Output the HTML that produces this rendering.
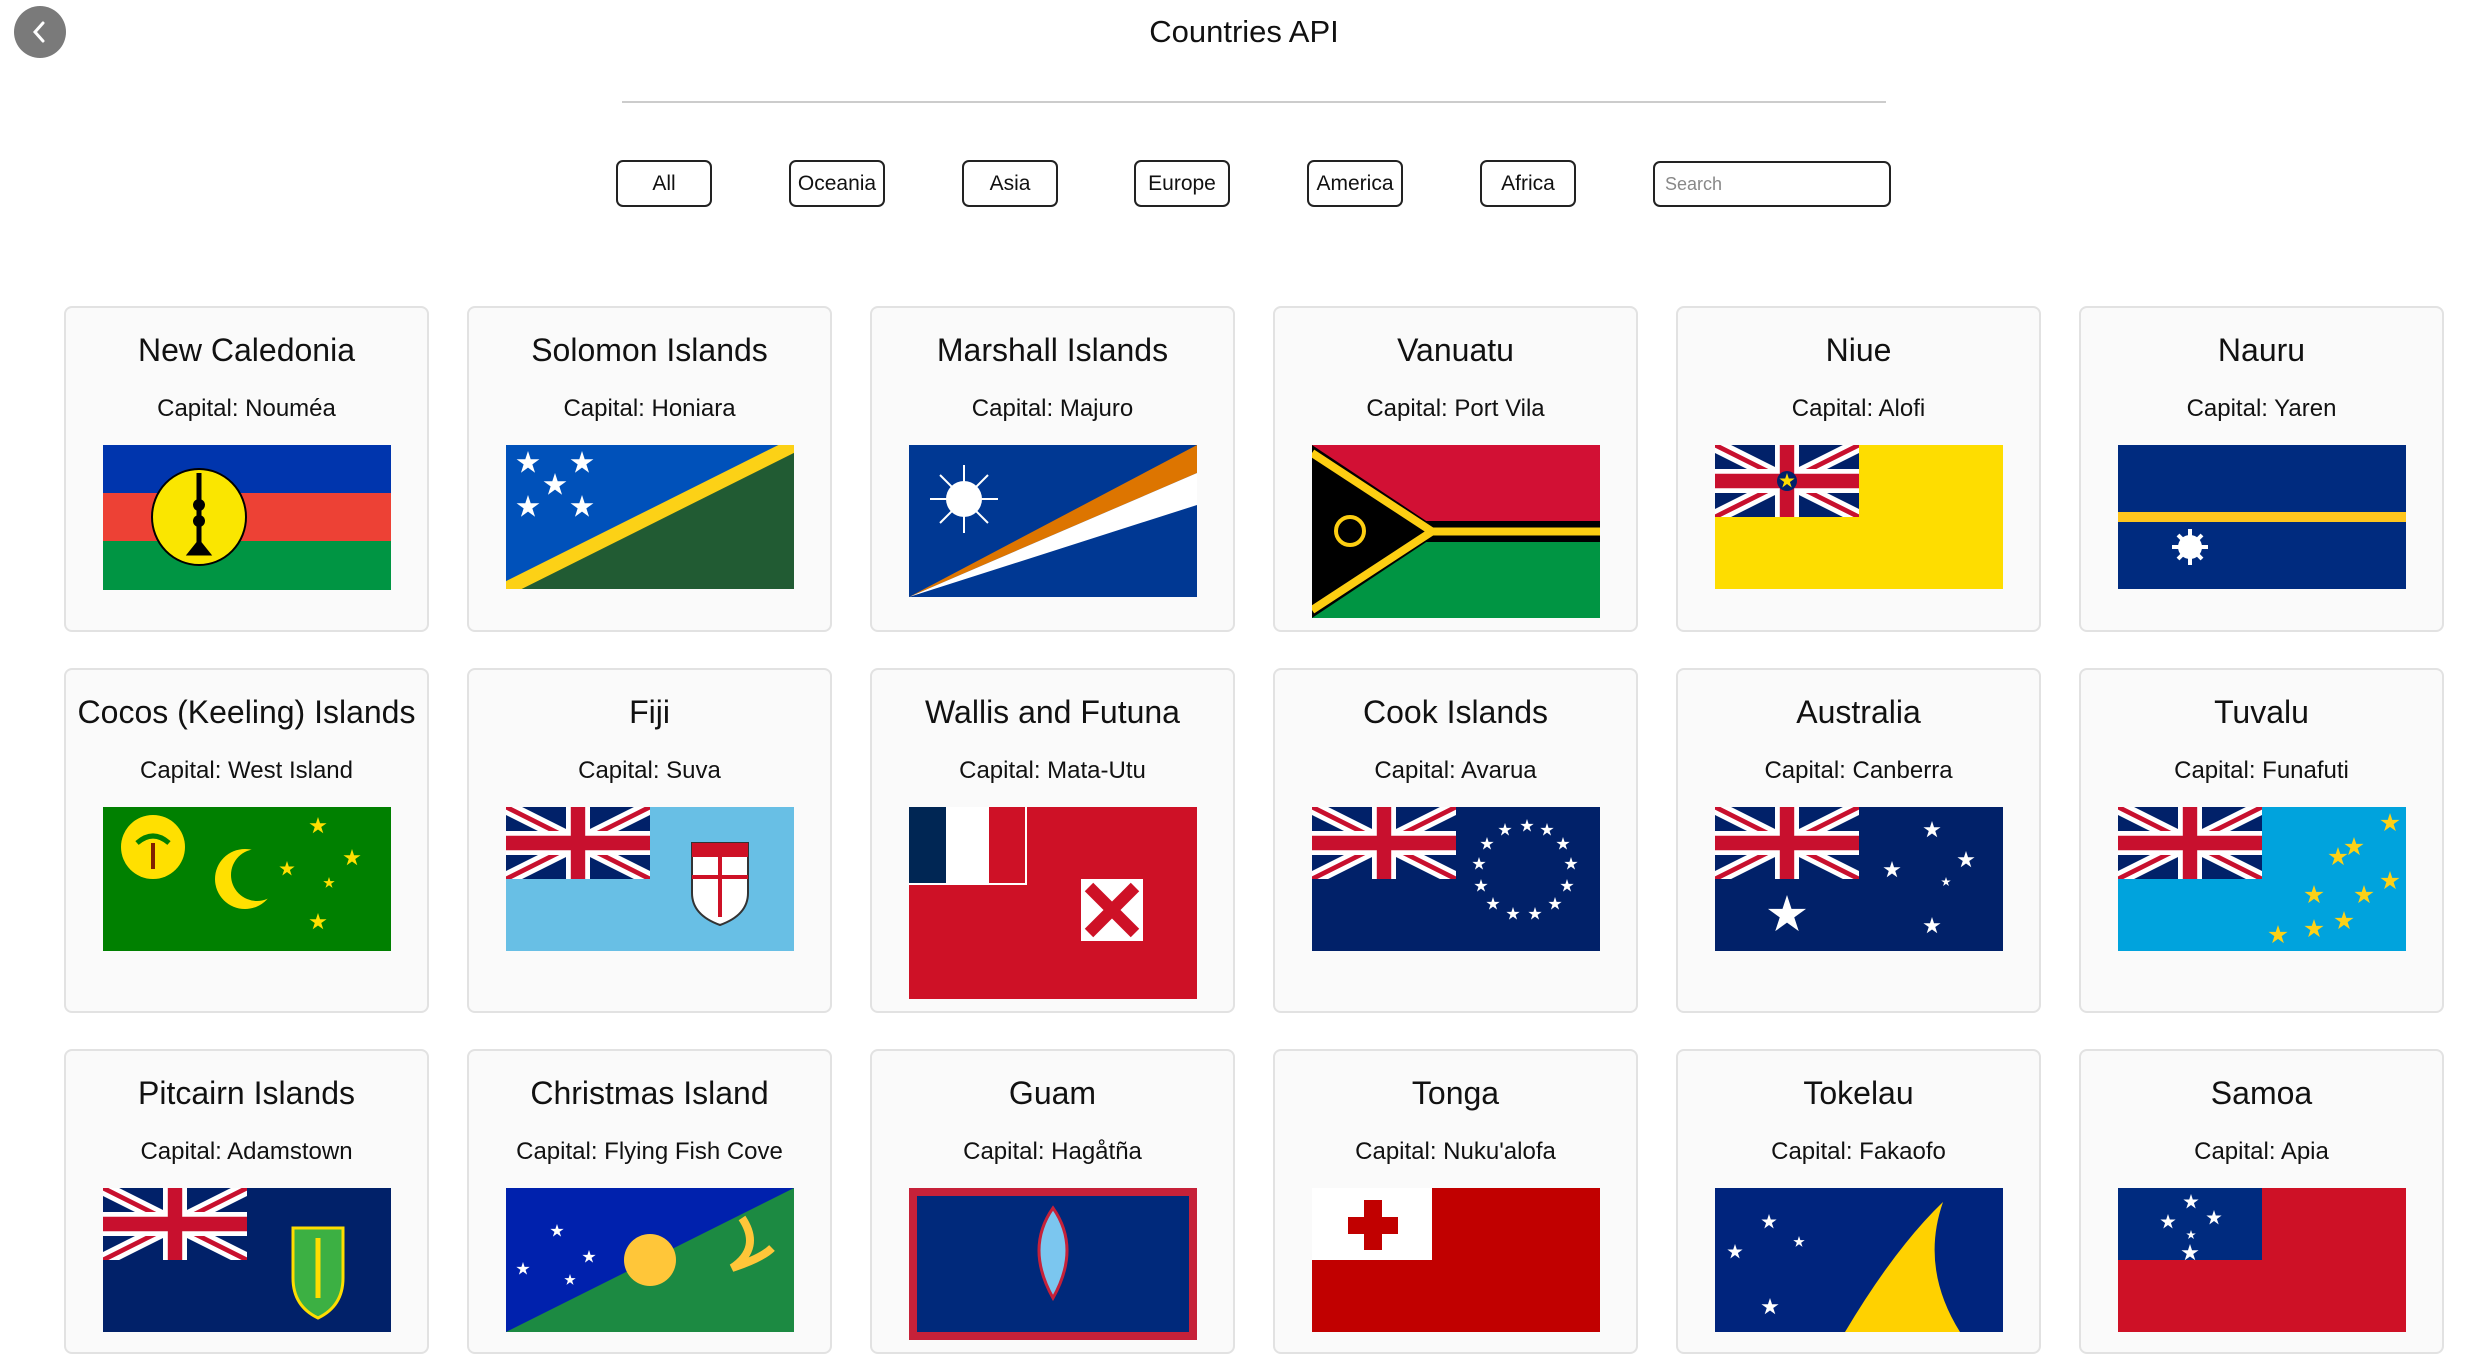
<!DOCTYPE html>
<html><head><meta charset="utf-8">
<style>
*{box-sizing:border-box;margin:0;padding:0}
body{width:2488px;height:1292px;overflow:hidden;background:#fff;font-family:"Liberation Sans",sans-serif;color:#111;position:relative}
.back{position:absolute;left:14px;top:6px;width:52px;height:52px;border-radius:50%;background:#7a7a7a}
h1{position:absolute;left:0;width:2488px;top:14px;text-align:center;font-size:31px;font-weight:normal}
.line{position:absolute;left:622px;top:101px;width:1264px;height:2px;background:#ccc}
.btn{position:absolute;top:160px;width:96px;height:47px;border:2px solid #222;border-radius:7px;font-size:21px;text-align:center;line-height:43px}
.search{position:absolute;top:161px;left:1653px;width:238px;height:46px;border:2px solid #222;border-radius:7px;font-size:18px;color:#888;padding-left:10px;line-height:42px}
.grid{position:absolute;left:64px;top:306px;display:grid;grid-template-columns:repeat(6,365px);column-gap:38px;row-gap:36px}
.card{background:#fafafa;border:2px solid #e2e2e2;border-radius:8px;text-align:center;padding-bottom:12px}
.card h2{font-size:32px;font-weight:normal;margin-top:22px;height:40px;line-height:40px;white-space:nowrap}
.card p{font-size:24px;margin-top:24px;height:30px;line-height:30px}
.card svg{display:block;margin:21px auto 0;width:288px}
</style></head><body>
<svg width="0" height="0" style="position:absolute">
<defs>
<symbol id="uj" viewBox="0 0 60 30"><rect width="60" height="30" fill="#012169"/><path d="M0,0L60,30M60,0L0,30" stroke="#fff" stroke-width="6"/><path d="M0,0L60,30M60,0L0,30" stroke="#C8102E" stroke-width="2"/><path d="M30,0v30M0,15h60" stroke="#fff" stroke-width="10"/><path d="M30,0v30M0,15h60" stroke="#C8102E" stroke-width="6"/></symbol>
<symbol id="st" viewBox="-1 -1 2 2"><polygon points="0,-1 0.225,-0.309 0.951,-0.309 0.363,0.118 0.588,0.809 0,0.382 -0.588,0.809 -0.363,0.118 -0.951,-0.309 -0.225,-0.309"/></symbol>
</defs></svg>
<div class="back"><svg width="52" height="52" viewBox="0 0 52 52"><path d="M29,17 L21,26 L29,35" stroke="#fff" stroke-width="3" fill="none" stroke-linecap="round"/></svg></div>
<h1>Countries API</h1>
<div class="line"></div>
<div class="btn" style="left:616px">All</div>
<div class="btn" style="left:789px">Oceania</div>
<div class="btn" style="left:962px">Asia</div>
<div class="btn" style="left:1134px">Europe</div>
<div class="btn" style="left:1307px">America</div>
<div class="btn" style="left:1480px">Africa</div>
<div class="search">Search</div>

<div class="grid">
<div class="card"><h2>New Caledonia</h2><p>Capital: Nouméa</p>
<svg viewBox="0 0 288 145" height="145"><rect width="288" height="49" fill="#0035ad"/><rect y="48" width="288" height="49" fill="#ed4135"/><rect y="96" width="288" height="49" fill="#009543"/><ellipse cx="96" cy="72" rx="47" ry="48" fill="#fae600" stroke="#000" stroke-width="2"/><path d="M96,28v76M88,108h16l-8,-10z" stroke="#000" stroke-width="5"/><circle cx="96" cy="60" r="6"/><circle cx="96" cy="76" r="6"/></svg></div>

<div class="card"><h2>Solomon Islands</h2><p>Capital: Honiara</p>
<svg viewBox="0 0 288 144" height="144"><rect width="288" height="144" fill="#215b33"/><polygon points="0,0 288,0 0,144" fill="#0051ba"/><path d="M0,144L288,0" stroke="#fcd116" stroke-width="14"/><g fill="#fff"><use href="#st" x="10" y="6" width="24" height="24"/><use href="#st" x="64" y="6" width="24" height="24"/><use href="#st" x="37" y="28" width="24" height="24"/><use href="#st" x="10" y="50" width="24" height="24"/><use href="#st" x="64" y="50" width="24" height="24"/></g></svg></div>

<div class="card"><h2>Marshall Islands</h2><p>Capital: Majuro</p>
<svg viewBox="0 0 288 152" height="152"><rect width="288" height="152" fill="#003893"/><polygon points="0,152 288,0 288,28" fill="#dd7500"/><polygon points="0,152 288,28 288,60" fill="#fff"/><circle cx="55" cy="54" r="18" fill="#fff"/><path d="M55,20v68M21,54h68M31,30l48,48M79,30l-48,48" stroke="#fff" stroke-width="2"/></svg></div>

<div class="card"><h2>Vanuatu</h2><p>Capital: Port Vila</p>
<svg viewBox="0 0 288 173" height="173"><rect width="288" height="87" fill="#d21034"/><rect y="86" width="288" height="87" fill="#009543"/><rect y="76" width="288" height="21" fill="#000"/><path d="M0,0L130,86.5L0,173" fill="#000"/><path d="M0,8L120,86.5L0,165M120,86.5H288" stroke="#fdce12" stroke-width="8" fill="none"/><path d="M0,14L108,86.5L0,159z" fill="#000"/><circle cx="38" cy="86" r="14" stroke="#fdce12" stroke-width="4" fill="none"/></svg></div>

<div class="card"><h2>Niue</h2><p>Capital: Alofi</p>
<svg viewBox="0 0 288 144" height="144"><rect width="288" height="144" fill="#fedd00"/><use href="#uj" width="144" height="72"/><circle cx="72" cy="36" r="10" fill="#012169"/><use href="#st" x="64" y="28" width="16" height="16" fill="#fedd00"/></svg></div>

<div class="card"><h2>Nauru</h2><p>Capital: Yaren</p>
<svg viewBox="0 0 288 144" height="144"><rect width="288" height="144" fill="#002b7f"/><rect y="67" width="288" height="10" fill="#ffc61e"/><circle cx="72" cy="102" r="12" fill="#fff"/><path d="M72,84v36M54,102h36M60,90l24,24M84,90l-24,24" stroke="#fff" stroke-width="4"/></svg></div>

<div class="card"><h2>Cocos (Keeling) Islands</h2><p>Capital: West Island</p>
<svg viewBox="0 0 288 144" height="144"><rect width="288" height="144" fill="#008000"/><circle cx="50" cy="40" r="32" fill="#ffe000"/><path d="M50,62V36" stroke="#802000" stroke-width="4"/><path d="M34,36q16,-14 32,0" stroke="#008000" stroke-width="5" fill="none"/><circle cx="142" cy="72" r="30" fill="#ffe000"/><circle cx="154" cy="68" r="26" fill="#008000"/><g fill="#ffe000"><use href="#st" x="176" y="54" width="16" height="16"/><use href="#st" x="206" y="10" width="18" height="18"/><use href="#st" x="240" y="42" width="18" height="18"/><use href="#st" x="220" y="70" width="12" height="12"/><use href="#st" x="206" y="106" width="18" height="18"/></g></svg></div>

<div class="card"><h2>Fiji</h2><p>Capital: Suva</p>
<svg viewBox="0 0 288 144" height="144"><rect width="288" height="144" fill="#68bfe5"/><use href="#uj" width="144" height="72"/><path d="M186,36h56v50q0,22 -28,32q-28,-10 -28,-32z" fill="#fff" stroke="#333" stroke-width="2"/><rect x="186" y="36" width="56" height="14" fill="#ce1126"/><path d="M214,50v60M186,70h56" stroke="#ce1126" stroke-width="4"/></svg></div>

<div class="card"><h2>Wallis and Futuna</h2><p>Capital: Mata-Utu</p>
<svg viewBox="0 0 288 192" height="192"><rect width="288" height="192" fill="#ce1126"/><rect width="118" height="78" fill="#fff"/><rect x="0" width="37" height="76" fill="#002654"/><rect x="80" width="36" height="76" fill="#ce1126"/><rect x="172" y="72" width="62" height="62" fill="#fff"/><path d="M180,80l46,46M226,80l-46,46" stroke="#ce1126" stroke-width="12"/></svg></div>

<div class="card"><h2>Cook Islands</h2><p>Capital: Avarua</p>
<svg viewBox="0 0 288 144" height="144"><rect width="288" height="144" fill="#012169"/><use href="#uj" width="144" height="72"/><g fill="#fff"><use href="#st" x="208" y="12" width="14" height="14"/><use href="#st" x="228" y="16" width="14" height="14"/><use href="#st" x="244" y="30" width="14" height="14"/><use href="#st" x="252" y="50" width="14" height="14"/><use href="#st" x="248" y="72" width="14" height="14"/><use href="#st" x="236" y="90" width="14" height="14"/><use href="#st" x="216" y="100" width="14" height="14"/><use href="#st" x="194" y="100" width="14" height="14"/><use href="#st" x="174" y="90" width="14" height="14"/><use href="#st" x="162" y="72" width="14" height="14"/><use href="#st" x="160" y="50" width="14" height="14"/><use href="#st" x="168" y="30" width="14" height="14"/><use href="#st" x="186" y="16" width="14" height="14"/></g></svg></div>

<div class="card"><h2>Australia</h2><p>Capital: Canberra</p>
<svg viewBox="0 0 288 144" height="144"><rect width="288" height="144" fill="#012169"/><use href="#uj" width="144" height="72"/><g fill="#fff"><use href="#st" x="52" y="88" width="40" height="40"/><use href="#st" x="208" y="110" width="18" height="18"/><use href="#st" x="168" y="54" width="18" height="18"/><use href="#st" x="208" y="14" width="18" height="18"/><use href="#st" x="242" y="44" width="18" height="18"/><use href="#st" x="226" y="70" width="10" height="10"/></g></svg></div>

<div class="card"><h2>Tuvalu</h2><p>Capital: Funafuti</p>
<svg viewBox="0 0 288 144" height="144"><rect width="288" height="144" fill="#00a3dd"/><use href="#uj" width="144" height="72"/><g fill="#fcd116"><use href="#st" x="262" y="6" width="20" height="20"/><use href="#st" x="226" y="30" width="20" height="20"/><use href="#st" x="210" y="40" width="20" height="20"/><use href="#st" x="262" y="64" width="20" height="20"/><use href="#st" x="236" y="78" width="20" height="20"/><use href="#st" x="186" y="78" width="20" height="20"/><use href="#st" x="216" y="104" width="20" height="20"/><use href="#st" x="186" y="112" width="20" height="20"/><use href="#st" x="150" y="118" width="20" height="20"/></g></svg></div>

<div class="card"><h2>Pitcairn Islands</h2><p>Capital: Adamstown</p>
<svg viewBox="0 0 288 144" height="144"><rect width="288" height="144" fill="#012169"/><use href="#uj" width="144" height="72"/><path d="M190,40h50v50q0,28 -25,40q-25,-12 -25,-40z" fill="#3cb043" stroke="#fedd00" stroke-width="3"/><path d="M215,50v60" stroke="#fedd00" stroke-width="5"/></svg></div>

<div class="card"><h2>Christmas Island</h2><p>Capital: Flying Fish Cove</p>
<svg viewBox="0 0 288 144" height="144"><rect width="288" height="144" fill="#1c8a42"/><polygon points="0,0 288,0 0,144" fill="#0021ad"/><circle cx="144" cy="72" r="26" fill="#ffc639"/><path d="M236,30q20,30 -10,50q30,-10 40,-20" stroke="#ffc639" stroke-width="8" fill="none"/><g fill="#fff"><use href="#st" x="44" y="36" width="14" height="14"/><use href="#st" x="76" y="62" width="14" height="14"/><use href="#st" x="10" y="74" width="14" height="14"/><use href="#st" x="58" y="86" width="12" height="12"/></g></svg></div>

<div class="card"><h2>Guam</h2><p>Capital: Hagåtña</p>
<svg viewBox="0 0 288 152" height="152"><rect width="288" height="152" fill="#c62139"/><rect x="8" y="8" width="272" height="136" fill="#00297b"/><path d="M144,20q-28,40 0,90q28,-50 0,-90z" fill="#7bc6ef" stroke="#c62139" stroke-width="3"/></svg></div>

<div class="card"><h2>Tonga</h2><p>Capital: Nuku'alofa</p>
<svg viewBox="0 0 288 144" height="144"><rect width="288" height="144" fill="#c10000"/><rect width="120" height="72" fill="#fff"/><rect x="52" y="12" width="18" height="50" fill="#c10000"/><rect x="36" y="29" width="50" height="17" fill="#c10000"/></svg></div>

<div class="card"><h2>Tokelau</h2><p>Capital: Fakaofo</p>
<svg viewBox="0 0 288 144" height="144"><rect width="288" height="144" fill="#00247d"/><path d="M228,14Q180,60 130,144H245Q205,80 228,14z" fill="#ffd100"/><g fill="#fff"><use href="#st" x="46" y="26" width="16" height="16"/><use href="#st" x="78" y="48" width="12" height="12"/><use href="#st" x="12" y="56" width="16" height="16"/><use href="#st" x="46" y="110" width="18" height="18"/></g></svg></div>

<div class="card"><h2>Samoa</h2><p>Capital: Apia</p>
<svg viewBox="0 0 288 144" height="144"><rect width="288" height="144" fill="#ce1126"/><rect width="144" height="72" fill="#002b7f"/><g fill="#fff"><use href="#st" x="65" y="6" width="16" height="16"/><use href="#st" x="42" y="26" width="16" height="16"/><use href="#st" x="88" y="22" width="16" height="16"/><use href="#st" x="68" y="42" width="10" height="10"/><use href="#st" x="63" y="56" width="18" height="18"/></g></svg></div>
</div>
</body></html>
